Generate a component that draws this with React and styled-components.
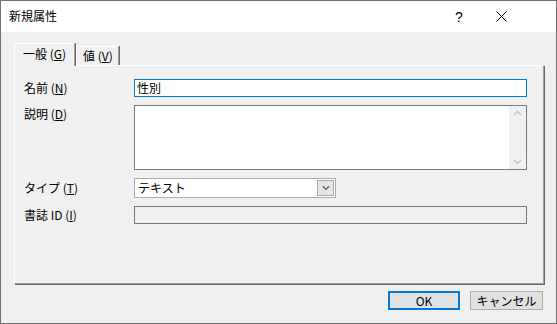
import React from 'react'
import styled, { createGlobalStyle } from 'styled-components'

const GlobalStyle = createGlobalStyle`
  html, body {
    margin: 0;
    padding: 0;
    background: #f0f0f0;
  }
  body {
    font-family: 'Noto Sans CJK JP', 'Noto Sans', sans-serif;
    font-size: 12px;
    color: #000;
  }
`

const Window = styled.div`
  width: 557px;
  height: 324px;
  box-sizing: border-box;
  border: 1px solid #707070;
  display: flex;
  flex-direction: column;
  background: #f0f0f0;
`

const TitleBar = styled.div`
  height: 31px;
  flex: none;
  background: #fff;
  display: flex;
  align-items: center;
  padding: 0 32px 0 8px;
`

const Title = styled.div`
  flex: 1;
  font-size: 12px;
  line-height: 1;
  padding-bottom: 1px;
`

const TitleButton = styled.div`
  width: ${p => p.$w}px;
  height: 100%;
  display: flex;
  align-items: center;
  justify-content: center;
  font-family: 'Liberation Sans', sans-serif;
  font-size: 14px;
`

const Body = styled.div`
  flex: 1;
  display: flex;
  flex-direction: column;
  padding: 11px 12px 0 13px;
`

const TabStrip = styled.div`
  display: flex;
  align-items: flex-end;
  height: 22px;
  position: relative;
  z-index: 1;
`

const Tab = styled.div`
  box-sizing: border-box;
  height: ${p => (p.$active ? '23px' : '19px')};
  margin-bottom: ${p => (p.$active ? '-1px' : '0')};
  padding: 0 ${p => p.$pr}px 0 ${p => p.$pl}px;
  background: #f0f0f0;
  border-top: 1px solid #fff;
  border-left: 1px solid #fff;
  border-right: 1px solid #a0a0a0;
  box-shadow: 1px 0 0 #696969;
  margin-right: 1px;
  display: flex;
  align-items: ${p => (p.$active ? 'flex-start' : 'center')};
  padding-top: ${p => (p.$active ? '3px' : '0')};
  line-height: 14px;
  white-space: nowrap;
`

const Panel = styled.div`
  box-sizing: border-box;
  height: 219px;
  border-top: 1px solid #fff;
  border-left: 1px solid #fff;
  border-right: 1px solid #a0a0a0;
  border-bottom: 1px solid #a0a0a0;
  box-shadow: 1px 1px 0 #696969;
  padding: 13px 16px 0 9px;
  display: grid;
  grid-template-columns: 110px 1fr;
  grid-auto-rows: min-content;
  row-gap: 8px;
`

const Label = styled.div`
  display: flex;
  align-items: ${p => (p.$top ? 'flex-start' : 'center')};
  padding-top: ${p => (p.$top ? '2px' : '0')};
  white-space: nowrap;
  line-height: 14px;
`

const TextInput = styled.div`
  box-sizing: border-box;
  height: ${p => p.$h || 18}px;
  border: 1px solid ${p => (p.$focused ? '#0078d7' : '#7a7a7a')};
  background: ${p => (p.$disabled ? '#f0f0f0' : '#fff')};
  display: flex;
  align-items: center;
  padding-left: 2px;
  line-height: 14px;
`

const TextArea = styled.div`
  box-sizing: border-box;
  height: 65px;
  border: 1px solid #7a7a7a;
  background: #fff;
  display: flex;
`

const TextAreaContent = styled.div`
  flex: 1;
`

const ScrollTrack = styled.div`
  width: 17px;
  background: #f0f0f0;
  display: flex;
  flex-direction: column;
  justify-content: space-between;
  align-items: center;
  padding: 4px 0;
`

const Select = styled.div`
  box-sizing: border-box;
  width: 202px;
  height: 20px;
  border: 1px solid #adadad;
  background: #fff;
  display: flex;
  align-items: center;
  padding: 1px;
`

const SelectText = styled.div`
  flex: 1;
  padding-left: 2px;
  line-height: 14px;
`

const SelectButton = styled.div`
  box-sizing: border-box;
  width: 17px;
  height: 16px;
  background: #e5e5e5;
  border: 1px solid #acacac;
  display: flex;
  align-items: center;
  justify-content: center;
`

const ButtonRow = styled.div`
  display: flex;
  justify-content: flex-end;
  gap: 10px;
  margin-top: 7px;
  padding-right: 1px;
`

const Button = styled.div`
  box-sizing: border-box;
  width: ${p => p.$w}px;
  height: 19px;
  background: #e1e1e1;
  border: ${p => (p.$default ? '2px solid #0078d7' : '1px solid #adadad')};
  display: flex;
  align-items: center;
  justify-content: center;
  line-height: 14px;
`

const Chevron = ({ up, color = '#606060', w = 9 }) => (
  <svg width={w} height="6" viewBox="0 0 9 6">
    <path
      d={up ? 'M1 5 L4.5 1.5 L8 5' : 'M1 1 L4.5 4.5 L8 1'}
      fill="none"
      stroke={color}
      strokeWidth="1.4"
    />
  </svg>
)

export default function App() {
  return (
    <>
      <GlobalStyle />
      <Window>
        <TitleBar>
          <Title>新規属性</Title>
          <TitleButton $w={38}>?</TitleButton>
          <TitleButton $w={46}>
            <svg width="11" height="11" viewBox="0 0 11 11">
              <path d="M0.5 0.5 L10.5 10.5 M10.5 0.5 L0.5 10.5" stroke="#000" strokeWidth="1" />
            </svg>
          </TitleButton>
        </TitleBar>
        <Body>
          <TabStrip>
            <Tab $active $pl={8} $pr={8}>一般 (<u>G</u>)</Tab>
            <Tab $pl={6} $pr={5}>値 (<u>V</u>)</Tab>
          </TabStrip>
          <Panel>
            <Label>名前 (<u>N</u>)</Label>
            <TextInput $focused>性別</TextInput>

            <Label $top>説明 (<u>D</u>)</Label>
            <TextArea>
              <TextAreaContent />
              <ScrollTrack>
                <Chevron up color="#c2c2c2" />
                <Chevron color="#c2c2c2" />
              </ScrollTrack>
            </TextArea>

            <Label>タイプ (<u>T</u>)</Label>
            <Select>
              <SelectText>テキスト</SelectText>
              <SelectButton>
                <Chevron w={8} />
              </SelectButton>
            </Select>

            <Label>書誌 ID (<u>I</u>)</Label>
            <TextInput $disabled />
          </Panel>
          <ButtonRow>
            <Button $default $w={72}>OK</Button>
            <Button $w={73}>キャンセル</Button>
          </ButtonRow>
        </Body>
      </Window>
    </>
  )
}
